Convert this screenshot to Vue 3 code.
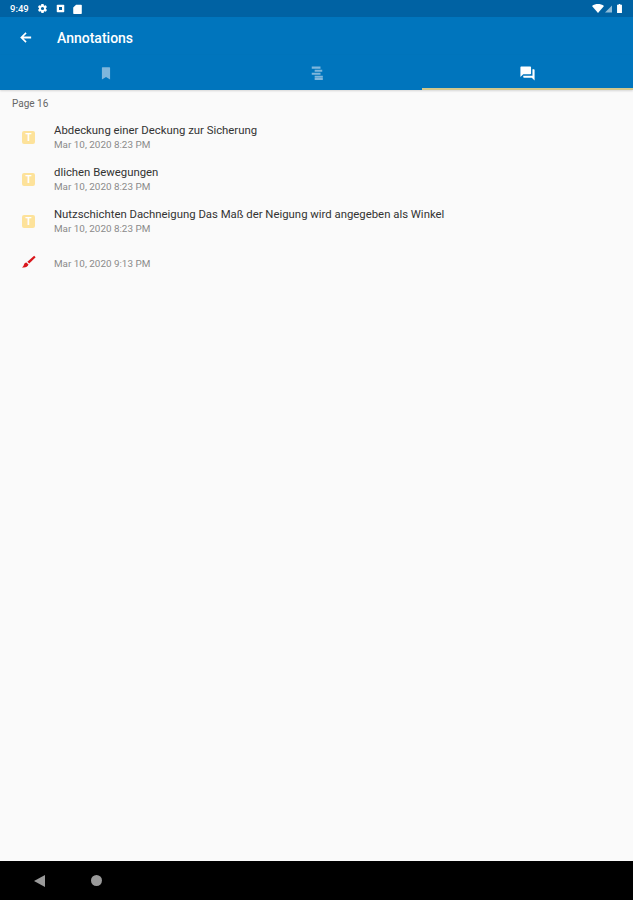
<template>
  <div class="screen">
    <div class="status-bar">
      <span class="clock">9:49</span>
      <svg class="st-icon" width="11" height="11" viewBox="0 0 24 24" fill="#fff">
        <path d="M19.4 13c.1-.3.1-.7.1-1s0-.7-.1-1l2.100-1.600c.2-.2.2-.4.1-.6l-2-3.500c-.1-.2-.4-.3-.6-.2l-2.500 1c-.5-.4-1.100-.7-1.700-1l-.4-2.700c0-.2-.2-.4-.5-.4h-4c-.3 0-.5.2-.5.4l-.4 2.700c-.6.3-1.200.6-1.700 1l-2.500-1c-.2-.1-.5 0-.6.2l-2 3.500c-.1.200-.1.400.1.600L4.500 11c0 .3-.1.700-.1 1s0 .7.1 1l-2.100 1.600c-.2.200-.2.400-.1.600l2 3.500c.1.200.4.300.6.200l2.500-1c.5.400 1.100.700 1.700 1l.4 2.700c0 .2.200.4.500.4h4c.3 0 .5-.2.500-.4l.4-2.700c.6-.3 1.200-.6 1.700-1l2.500 1c.2.100.5 0 .6-.2l2-3.500c.1-.2.100-.4-.1-.6L19.400 13zM12 15.500a3.500 3.500 0 1 1 0-7 3.500 3.500 0 0 1 0 7z"/>
      </svg>
      <svg class="st-icon" width="9" height="9" viewBox="0 0 12 12">
        <rect x="1" y="1" width="10" height="10" rx="1" fill="#fff"/>
        <rect x="4" y="4" width="4" height="4" fill="#0062a3"/>
      </svg>
      <svg class="st-icon" width="9" height="10" viewBox="0 0 12 14">
        <path d="M4 1h7a1 1 0 0 1 1 1v11a1 1 0 0 1-1 1H1a1 1 0 0 1-1-1V5z" fill="#fff"/>
      </svg>
      <span class="spacer"></span>
      <svg width="12" height="9" viewBox="0 0 24 18" fill="#fff">
        <path d="M12 18 0 4c7-5.300 17-5.300 24 0z"/>
      </svg>
      <svg class="signal" width="7" height="8" viewBox="0 0 8 8" fill="#8fbcd9">
        <path d="M8 0v8H0z"/>
      </svg>
      <svg class="battery" width="5" height="9" viewBox="0 0 6 11" fill="#fff">
        <path d="M2 0h2v1h2v10H0V1h2z"/>
      </svg>
    </div>

    <header class="toolbar">
      <svg class="back" width="15" height="15" viewBox="0 0 24 24" fill="#fff">
        <path d="M21 10.500H8.800l5-5L12 3.500 3.500 12l8.500 8.500 1.800-2-5-5H21z"/>
      </svg>
      <h1 class="title">Annotations</h1>
    </header>

    <nav class="tabs">
      <div v-for="tab in tabs" :key="tab.name" class="tab" :class="{ active: tab.active }">
        <svg v-if="tab.name === 'bookmarks'" width="14" height="14" viewBox="0 0 24 24" fill="currentColor">
          <path d="M18 2H6a1 1 0 0 0-1 1v20l7-4 7 4V3a1 1 0 0 0-1-1z"/>
        </svg>
        <svg v-else-if="tab.name === 'outline'" width="16" height="14" viewBox="0 0 24 24" fill="currentColor">
          <path d="M3 1h15v3.500H3zM8 6.500h13V10H8zM3 11.500h15V15H3zM8 16.500h14V20H8zM8 20.500h14V24H8z"/>
        </svg>
        <svg v-else width="17" height="17" viewBox="0 0 24 24" fill="currentColor">
          <path d="M21 6h-2v9H6v2c0 .550.450 1 1 1h11l4 4V7c0-.550-.450-1-1-1zm-4 6V3c0-.550-.450-1-1-1H3c-.550 0-1 .450-1 1v14l4-4h10c.550 0 1-.450 1-1z"/>
        </svg>
      </div>
    </nav>

    <main class="content">
      <div class="page-label">Page 16</div>
      <div v-for="(item, i) in annotations" :key="i" class="row">
        <div class="row-icon">
          <span v-if="item.kind === 'text'" class="note-icon">T</span>
          <svg v-else class="ink-icon" width="15" height="15" viewBox="0 0 16 16">
            <path d="M14 .8 15.600 2.400 8.800 9 6.800 7.200z" fill="#d9161c"/>
            <path d="M5.800 8 8 10.200c-.8 2.600-3.400 3.600-7 3 1.600-.9 1.800-2 2.200-3.200.4-1.100 1.400-1.800 2.600-2z" fill="#d9161c"/>
          </svg>
        </div>
        <div class="row-text">
          <div v-if="item.title" class="row-title">{{ item.title }}</div>
          <div class="row-date">{{ item.date }}</div>
        </div>
      </div>
    </main>

    <footer class="nav-bar">
      <span class="nav-back"></span>
      <span class="nav-home"></span>
    </footer>
  </div>
</template>

<script setup>
const tabs = [
  { name: 'bookmarks', active: false },
  { name: 'outline', active: false },
  { name: 'annotations', active: true }
]

const annotations = [
  { kind: 'text', title: 'Abdeckung einer Deckung zur Sicherung', date: 'Mar 10, 2020 8:23 PM' },
  { kind: 'text', title: 'dlichen Bewegungen', date: 'Mar 10, 2020 8:23 PM' },
  { kind: 'text', title: 'Nutzschichten Dachneigung Das Maß der Neigung wird angegeben als Winkel', date: 'Mar 10, 2020 8:23 PM' },
  { kind: 'ink', title: '', date: 'Mar 10, 2020 9:13 PM' }
]
</script>

<style>
html, body {
  margin: 0;
  background: #fafafa;
}
</style>

<style scoped>
.screen {
  width: 633px;
  height: 900px;
  display: flex;
  flex-direction: column;
  overflow: hidden;
  background: #fafafa;
  font-family: Roboto, "Liberation Sans", sans-serif;
}

.status-bar {
  height: 17px;
  flex: none;
  display: flex;
  align-items: center;
  padding: 0 10px;
  background: #0062a3;
  color: #fff;
}
.clock {
  font-size: 9.5px;
  font-weight: 500;
  width: 27px;
}
.st-icon {
  margin-right: 8px;
}
.spacer {
  flex: 1;
}
.signal {
  margin: 0 2px 0 1px;
}
.battery {
  margin: 0 1px 0 3px;
}

.toolbar {
  height: 38px;
  flex: none;
  display: flex;
  align-items: center;
  padding: 3px 0 0 18px;
  box-sizing: border-box;
  background: #0075bd;
}
.back {
  margin-right: 24px;
}
.title {
  margin: 0;
  color: #fff;
  font-size: 14px;
  font-weight: 500;
}

.tabs {
  height: 35px;
  flex: none;
  display: flex;
  background: #0075bd;
  box-shadow: 0 1px 2px rgba(0, 0, 0, 0.15);
}
.tab {
  flex: 1;
  display: flex;
  align-items: center;
  justify-content: center;
  padding-top: 3px;
  color: #7fb6dc;
  border-bottom: 2px solid transparent;
}
.tab.active {
  color: #fff;
  border-bottom-color: #d2c88c;
}

.content {
  flex: 1;
  padding-top: 8px;
}
.page-label {
  height: 18px;
  padding-left: 12px;
  font-size: 10px;
  line-height: 12px;
  color: #666;
}
.row {
  height: 42px;
  display: flex;
  align-items: center;
  padding-top: 1px;
  box-sizing: border-box;
}
.row-icon {
  width: 54px;
  padding-left: 22px;
  box-sizing: border-box;
  display: flex;
}
.note-icon {
  width: 13px;
  height: 13px;
  border-radius: 2px;
  background: #fde29a;
  color: #fff;
  font-size: 10px;
  font-weight: 700;
  line-height: 13px;
  text-align: center;
}
.ink-icon {
  margin: -2px 0 0 -1px;
}
.row-title {
  font-size: 11.35px;
  line-height: 14px;
  color: #333;
}
.row-date {
  margin-top: 1px;
  font-size: 9.9px;
  line-height: 14px;
  color: #8a8a8a;
}

.nav-bar {
  height: 39px;
  flex: none;
  display: flex;
  align-items: center;
  background: #000;
  padding-left: 34px;
}
.nav-back {
  width: 0;
  height: 0;
  border-top: 6px solid transparent;
  border-bottom: 6px solid transparent;
  border-right: 11px solid #9a9a9a;
  margin-right: 46px;
}
.nav-home {
  width: 11px;
  height: 11px;
  border-radius: 50%;
  background: #9a9a9a;
}
</style>
